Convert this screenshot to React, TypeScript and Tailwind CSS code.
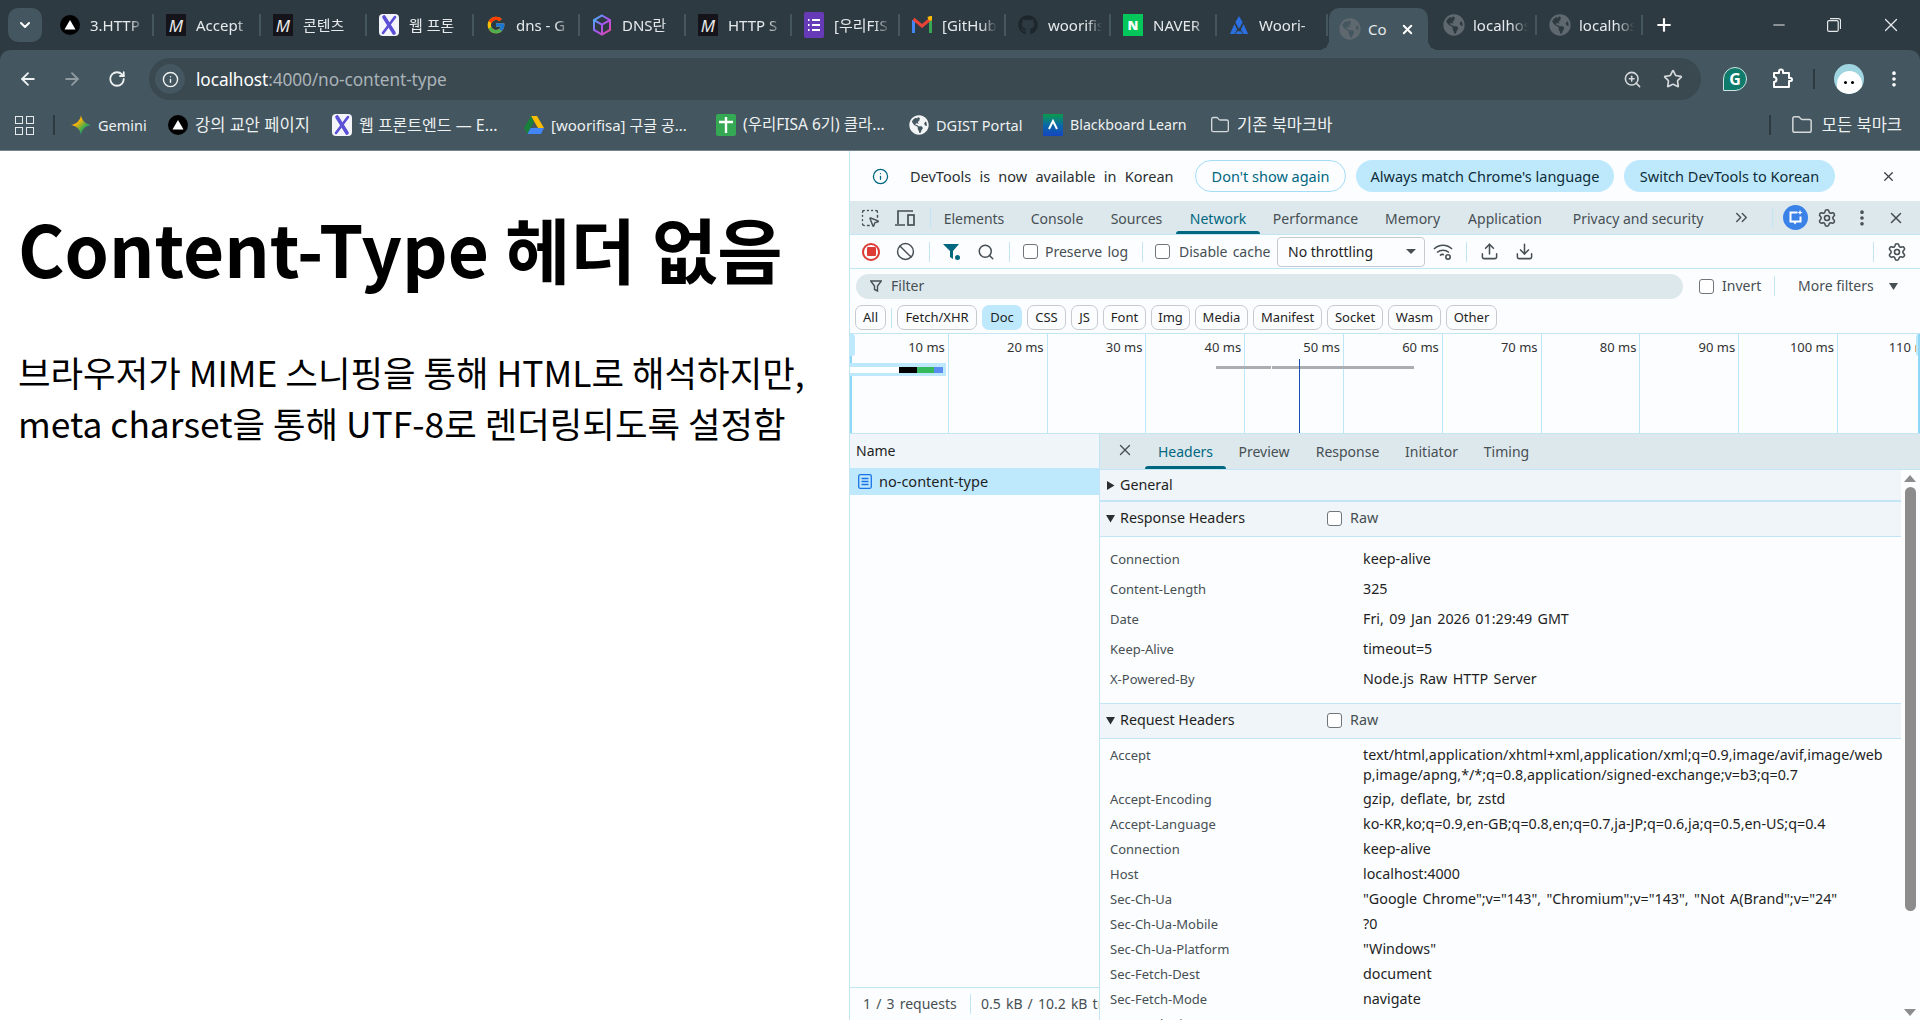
import React from "react";
import {
  ArrowLeft, ArrowRight, RotateCw, Info, ZoomIn, Star, MoreVertical, Minus, X, Plus, ChevronDown, Folder, Search, Ban,
  Upload, Download, Settings, ChevronsRight, SquareDashedMousePointer,
} from "lucide-react";
import { FaGithub, FaGlobeAmericas } from "react-icons/fa";
import { FcGoogle } from "react-icons/fc";

const Vercel = ({ s = 20 }: { s?: number }) => (
  <svg width={s} height={s} viewBox="0 0 20 20"><circle cx="10" cy="10" r="10" fill="#000" /><path d="M10 5l5.5 9.5h-11z" fill="#fff" /></svg>
);
const Mdn = () => (
  <div className="w-5 h-[22px] bg-[#15141a] flex items-center justify-center text-[#e8e8e8] italic text-[17px] leading-none">M</div>
);
const Tools = ({ s = 20 }: { s?: number }) => (
  <svg width={s} height={s + 2} viewBox="0 0 20 22"><rect width="20" height="22" rx="4" fill="#f4f4fb" /><path d="M5 3l10 16" stroke="#5a4fd6" strokeWidth="3.6" strokeLinecap="round" /><path d="M16 3L4 19" stroke="#5a4fd6" strokeWidth="2.600" strokeLinecap="round" /></svg>
);
const Cube = () => (
  <svg width="20" height="22" viewBox="0 0 20 22" fill="none"><defs><linearGradient id="cb" x1="0" y1="0" x2="1" y2="1"><stop stopColor="#38bdf8" /><stop offset=".5" stopColor="#a855f7" /><stop offset="1" stopColor="#ec4899" /></linearGradient></defs><path d="M10 1.5l8 4.6v9.8l-8 4.6-8-4.6V6.100zM2 6.100l8 4.600 8-4.600M10 10.700v9.800" stroke="url(#cb)" strokeWidth="2" /></svg>
);
const Forms = () => (
  <svg width="20" height="26" viewBox="0 0 20 26"><rect width="20" height="26" rx="2" fill="#673ab7" /><path d="M8 8h8M8 13h8M8 18h8M4 8h1.500M4 13h1.500M4 18h1.500" stroke="#fff" strokeWidth="2" /></svg>
);
const Gmail = () => (
  <svg width="20" height="18" viewBox="0 0 20 18" fill="none"><path d="M1.500 17V4" stroke="#4285f4" strokeWidth="3" /><path d="M18.500 17V4" stroke="#34a853" strokeWidth="3" /><path d="M1.500 3l8.500 7 8.500-7" stroke="#ea4335" strokeWidth="3" /><path d="M16 2.500l2.500-1v3" stroke="#fbbc04" strokeWidth="3" /></svg>
);
const Naver = () => (
  <div className="w-5 h-[22px] bg-[#03c75a] flex items-center justify-center text-white font-black text-[13px] leading-none">N</div>
);
const Woori = () => (
  <svg width="22" height="22" viewBox="0 0 22 22" fill="#2b6fe0"><path d="M11 1l4 7-4 7-4-7z" /><path d="M6 10l3 6-3 5H1z" /><path d="M16 10l5 11h-5l-3-5z" /><path d="M9 18h4l2 3H7z" /></svg>
);
const Globe = ({ c = "#5e686e", s = 22 }: { c?: string; s?: number }) => <FaGlobeAmericas size={s} color={c} />;
const Gemini = () => (
  <svg width="20" height="20" viewBox="0 0 20 20"><defs><linearGradient id="gm" x1="0" y1="0" x2="1" y2="1"><stop stopColor="#ef4444" /><stop offset=".35" stopColor="#f5b50a" /><stop offset=".65" stopColor="#34a853" /><stop offset="1" stopColor="#4285f4" /></linearGradient></defs><path d="M10 0c.8 5.500 4.500 9.200 10 10-5.500.8-9.200 4.500-10 10-.8-5.500-4.500-9.200-10-10 5.500-.8 9.200-4.500 10-10z" fill="url(#gm)" /></svg>
);
const Drive = () => (
  <svg width="20" height="18" viewBox="0 0 20 18"><path d="M7 0h6l7 12h-6z" fill="#fbbc04" /><path d="M7 0l3 6-6.500 12L0 12z" fill="#188038" /><path d="M6.500 12H20l-3 6H3.500z" fill="#4285f4" /></svg>
);
const Sheet = () => (
  <svg width="20" height="22" viewBox="0 0 20 22"><rect width="20" height="22" rx="2" fill="#34a853" /><path d="M3 8h14M10 3v16" stroke="#fff" strokeWidth="2.400" /></svg>
);
const Board = () => (
  <svg width="20" height="22" viewBox="0 0 20 22"><defs><linearGradient id="bb" x1="0" y1="0" x2="0" y2="1"><stop stopColor="#0a9c4a" /><stop offset=".5" stopColor="#0a6aa8" /><stop offset="1" stopColor="#1545c0" /></linearGradient></defs><rect width="20" height="22" fill="url(#bb)" /><path d="M6 15l4-8 4 8" stroke="#fff" strokeWidth="2" fill="none" /></svg>
);

const tabs = [
  { i: <Vercel />, t: "3.HTTP", w: "w-[106px]" },
  { i: <Mdn />, t: "Accept", w: "w-[107px]" },
  { i: <Mdn />, t: "콘텐츠", w: "w-[106px]" },
  { i: <Tools />, t: "웹 프론", w: "w-[107px]" },
  { i: <FcGoogle size={22} />, t: "dns - G", w: "w-[106px]" },
  { i: <Cube />, t: "DNS란", w: "w-[106px]" },
  { i: <Mdn />, t: "HTTP S", w: "w-[106px]" },
  { i: <Forms />, t: "[우리FIS", w: "w-[108px]" },
  { i: <Gmail />, t: "[GitHub", w: "w-[106px]" },
  { i: <FaGithub size={20} color="#1d262c" />, t: "woorifis", w: "w-[105px]" },
  { i: <Naver />, t: "NAVER", w: "w-[106px]" },
  { i: <Woori />, t: "Woori-", w: "w-[111px]" },
];

const bookmarks = [
  { i: <Gemini />, t: "Gemini", w: "w-[97px] text-[14.500px]" },
  { i: <Vercel />, t: "강의 교안 페이지", w: "w-[164px] text-[16.500px]" },
  { i: <Tools />, t: "웹 프론트엔드 — E...", w: "w-[192px] text-[16px]" },
  { i: <Drive />, t: "[woorifisa] 구글 공...", w: "w-[192px] text-[15px]" },
  { i: <Sheet />, t: "(우리FISA 6기) 클라...", w: "w-[193px] text-[15.500px]" },
  { i: <Globe c="#f2f4f5" s={20} />, t: "DGIST Portal", w: "w-[134px] text-[14.500px]" },
  { i: <Board />, t: "Blackboard Learn", w: "w-[167px] text-[14.200px]" },
  { i: <Folder size={22} color="#d5d9db" strokeWidth={1.6} />, t: "기존 북마크바", w: "w-[130px] text-[16.500px]" },
];

const Sep = ({ c = "h-[24px]" }: { c?: string }) => <div className={`w-px bg-[#c3e6f7] shrink-0 ${c}`} />;
const Check = () => <div className="w-[15px] h-[15px] rounded-[3px] border border-[#6f7579] bg-white shrink-0" />;

const dtTabs = [
  { t: "Elements", w: "w-[86px]" },
  { t: "Console", w: "w-[80px]" },
  { t: "Sources", w: "w-[79px]" },
  { t: "Network", w: "w-[84px]", a: true },
  { t: "Performance", w: "w-[111px]" },
  { t: "Memory", w: "w-[83px]" },
  { t: "Application", w: "w-[102px]" },
  { t: "Privacy and security", w: "w-[164px]" },
];

const chips = [
  { t: "Fetch/XHR", w: "w-[80px]" },
  { t: "Doc", w: "w-[40px]", a: true },
  { t: "CSS", w: "w-[39px]" },
  { t: "JS", w: "w-[27px]" },
  { t: "Font", w: "w-[43px]" },
  { t: "Img", w: "w-[39px]" },
  { t: "Media", w: "w-[53px]" },
  { t: "Manifest", w: "w-[69px]" },
  { t: "Socket", w: "w-[56px]" },
  { t: "Wasm", w: "w-[53px]" },
  { t: "Other", w: "w-[51px]" },
];

const resp = [
  ["Connection", "keep-alive"],
  ["Content-Length", "325"],
  ["Date", "Fri, 09 Jan 2026 01:29:49 GMT"],
  ["Keep-Alive", "timeout=5"],
  ["X-Powered-By", "Node.js Raw HTTP Server"],
];
const req = [
  ["Accept-Encoding", "gzip, deflate, br, zstd"],
  ["Accept-Language", "ko-KR,ko;q=0.9,en-GB;q=0.8,en;q=0.7,ja-JP;q=0.6,ja;q=0.5,en-US;q=0.4"],
  ["Connection", "keep-alive"],
  ["Host", "localhost:4000"],
  ["Sec-Ch-Ua", '"Google Chrome";v="143", "Chromium";v="143", "Not A(Brand";v="24"'],
  ["Sec-Ch-Ua-Mobile", "?0"],
  ["Sec-Ch-Ua-Platform", '"Windows"'],
  ["Sec-Fetch-Dest", "document"],
  ["Sec-Fetch-Mode", "navigate"],
  ["Sec-Fetch-Site", "none"],
];
const ticks = ["10 ms", "20 ms", "30 ms", "40 ms", "50 ms", "60 ms", "70 ms", "80 ms", "90 ms", "100 ms", "110 ms"];

const Tri = ({ open }: { open?: boolean }) => (
  <svg width="9" height="9" viewBox="0 0 9 9" className="shrink-0" fill="#2b2f31">{open ? <path d="M0 1h9L4.500 8.500z" /> : <path d="M1 0l7.500 4.500L1 9z" />}</svg>
);

export default function App() {
  return (
    <div className="w-[1920px] h-[1020px] overflow-hidden flex flex-col bg-[#2e3a41] font-['Noto_Sans','Noto_Sans_CJK_KR',sans-serif]">
      {/* tab strip */}
      <div className="h-[50px] shrink-0 flex items-center pl-[8px] text-[#e6eaec] text-[15px]">
        <div className="w-[34px] h-[34px] rounded-[10px] bg-[#44565f] flex items-center justify-center mr-[6px] shrink-0">
          <ChevronDown size={16} color="#fff" strokeWidth={3} />
        </div>
        {tabs.map((t) => (
          <div key={t.t} className={`${t.w} h-[34px] flex items-center pl-[12px] shrink-0`}>
            <div className="w-5 flex items-center justify-center shrink-0">{t.i}</div>
            <div className="ml-[10px] flex-1 overflow-hidden whitespace-nowrap [mask-image:linear-gradient(to_right,#000_65%,transparent_90%)]">{t.t}</div>
            <div className="w-[2px] h-[22px] bg-[#46565f] shrink-0 ml-[1px]" />
          </div>
        ))}
        <div className="w-[99px] h-[42px] mt-[8px] ml-[1px] bg-[#44565f] rounded-t-[10px] flex items-center pl-[10px] shrink-0 relative">
          <Globe />
          <span className="ml-[7px] flex-1 overflow-hidden">Co</span>
          <X size={15} color="#fff" strokeWidth={3} className="mr-[13px]" />
          <div className="absolute left-[-10px] bottom-0 w-[10px] h-[10px] bg-[radial-gradient(circle_at_0_0,#2e3a41_10px,#44565f_10px)]" />
          <div className="absolute right-[-10px] bottom-0 w-[10px] h-[10px] bg-[radial-gradient(circle_at_100%_0,#2e3a41_10px,#44565f_10px)]" />
        </div>
        {["a", "b"].map((k, n) => (
          <div key={k} className={`w-[106px] h-[34px] flex items-center shrink-0 pl-[12px] ${n === 0 ? "ml-[3px]" : ""}`}>
            <Globe />
            <div className="ml-[8px] flex-1 overflow-hidden whitespace-nowrap [mask-image:linear-gradient(to_right,#000_65%,transparent_95%)]">localhost</div>
            <div className="w-[2px] h-[20px] bg-[#46565f] shrink-0 ml-[4px]" />
          </div>
        ))}
        <Plus size={20} color="#fff" strokeWidth={2.6} className="ml-[11px] shrink-0" />
        <div className="flex-1" />
        <div className="flex items-center shrink-0 pr-[18px] gap-[39px]">
          <Minus size={18} color="#e6eaec" strokeWidth={1.4} />
          <svg width="14" height="14" viewBox="0 0 14 14" fill="none" stroke="#e6eaec" strokeWidth="1.200"><rect x=".6" y="2.600" width="10.600" height="10.800" rx="1.500" /><path d="M3 .6h8.500a2 2 0 012 2V11" /></svg>
          <X size={22} color="#e6eaec" strokeWidth={1.3} />
        </div>
      </div>

      {/* toolbar */}
      <div className="h-[50px] shrink-0 bg-[#44565f] rounded-t-[10px] flex items-center pl-[18px] pt-[8px]">
        <ArrowLeft size={20} color="#eef1f2" strokeWidth={2.2} />
        <ArrowRight size={20} color="#8f9ba1" strokeWidth={2.2} className="ml-[24px]" />
        <RotateCw size={18} color="#eef1f2" strokeWidth={2.4} className="ml-[26px]" />
        <div className="ml-[23px] w-[1552px] h-[42px] rounded-full bg-[#3a4850] flex items-center pl-[6px] pr-[18px]">
          <div className="w-[30px] h-[30px] rounded-full bg-[#44565f] flex items-center justify-center"><Info size={17} color="#eef1f2" strokeWidth={2} /></div>
          <div className="ml-[11px] pt-[2px] text-[17.300px] leading-none text-[#aab3b8] flex-1 tracking-[-0.1px]"><span className="text-white">localhost</span>:4000/no-content-type</div>
          <ZoomIn size={19} color="#d5d9db" strokeWidth={2} />
          <Star size={20} color="#d5d9db" strokeWidth={2} className="ml-[21px]" />
        </div>
        <div className="ml-[22px] w-[24px] h-[24px] rounded-full rounded-bl-none bg-[#0e7b6c] border border-[#cfe4e0] flex items-center justify-center text-white text-[16px] font-bold leading-none shrink-0">G</div>
        <svg width="22" height="22" viewBox="0 0 22 22" fill="none" stroke="#fff" strokeWidth="2" className="ml-[24px] shrink-0"><path d="M3 5h5V3.500a2 2 0 014 0V5h6v5h1.500a1.500 1.500 0 010 3H18v6H3v-5a2.500 2.500 0 000-5z" strokeLinejoin="round" /></svg>
        <div className="w-[2px] h-[20px] bg-[#2e3a41] ml-[20px] shrink-0" />
        <div className="ml-[19px] w-[30px] h-[30px] rounded-full bg-[#9fd5e0] flex items-end justify-center overflow-hidden shrink-0">
          <div className="w-[25px] h-[23px] rounded-t-full bg-white flex items-center justify-center gap-[4px]">
            <div className="w-[3px] h-[3px] bg-black rounded-full" />
            <div className="w-[3px] h-[3px] bg-black rounded-full" />
          </div>
        </div>
        <MoreVertical size={20} color="#fff" strokeWidth={2.4} className="ml-[20px] shrink-0" />
      </div>

      {/* bookmarks */}
      <div className="h-[51px] shrink-0 bg-[#44565f] flex items-center pl-[15px] border-b border-[#76858d] text-[#eef1f2] leading-none">
        <div className="grid grid-cols-2 gap-[3px] shrink-0">
          <div className="w-[8px] h-[8px] border-[1.500px] border-[#e6eaec]" />
          <div className="w-[8px] h-[8px] border-[1.500px] border-[#e6eaec]" />
          <div className="w-[8px] h-[8px] border-[1.500px] border-[#e6eaec]" />
          <div className="w-[8px] h-[8px] border-[1.500px] border-[#e6eaec]" />
        </div>
        <div className="w-[2px] h-[20px] bg-[#2e3a41] ml-[19px] mr-[16px] shrink-0" />
        {bookmarks.map((b) => (
          <div key={b.t} className={`${b.w} flex items-center gap-[7px] shrink-0 whitespace-nowrap`}>
            <div className="w-5 flex justify-center shrink-0">{b.i}</div>
            <span>{b.t}</span>
          </div>
        ))}
        <div className="flex-1" />
        <div className="w-[2px] h-[20px] bg-[#2e3a41] mr-[20px] shrink-0" />
        <Folder size={22} color="#d5d9db" strokeWidth={1.6} className="shrink-0" />
        <span className="ml-[9px] mr-[18px] whitespace-nowrap text-[16.500px]">모든 북마크</span>
      </div>

      {/* main */}
      <div className="flex-1 min-h-0 flex bg-white">
        {/* page */}
        <div className="w-[849px] shrink-0 pl-[18px] pr-[20px] font-['Noto_Sans_CJK_KR','Noto_Sans',sans-serif] text-black">
          <h1 className="text-[71px] font-bold leading-[96px] mt-[48px] whitespace-nowrap">Content-Type 헤더 없음</h1>
          <p className="text-[35.400px] leading-[51px] mt-[51px] whitespace-nowrap">브라우저가 MIME 스니핑을 통해 HTML로 해석하지만,<br />meta charset을 통해 UTF-8로 렌더링되도록 설정함</p>
        </div>

        {/* devtools */}
        <div className="flex-1 min-w-0 border-l border-[#c3e6f7] bg-[#fbfdff] flex flex-col text-[13px] text-[#1f1f1f] leading-none">
          {/* banner */}
          <div className="h-[50px] shrink-0 flex items-center pl-[22px] text-[14.500px]">
            <Info size={17} color="#00677f" strokeWidth={1.8} />
            <span className="ml-[21px] w-[285px] text-[#2b2f31] whitespace-nowrap [word-spacing:4.500px]">DevTools is now available in Korean</span>
            <div className="w-[151px] h-[32px] rounded-full border border-[#a5dcf7] flex items-center justify-center text-[#00677f]">Don't show again</div>
            <div className="ml-[10px] w-[258px] h-[32px] rounded-full bg-[#bee9fd] flex items-center justify-center text-[#0f2d38]">Always match Chrome's language</div>
            <div className="ml-[10px] w-[211px] h-[32px] rounded-full bg-[#bee9fd] flex items-center justify-center text-[#0f2d38]">Switch DevTools to Korean</div>
            <X size={15} color="#3c4043" strokeWidth={2} className="ml-[46px]" />
          </div>
          {/* tabs */}
          <div className="h-[34px] shrink-0 bg-[#dde8ed] border-b border-[#c3e6f7] flex items-stretch text-[14px] text-[#474f53]">
            <div className="flex items-center pl-[10px] w-[80px] shrink-0">
              <SquareDashedMousePointer size={20} color="#474f53" strokeWidth={1.7} />
              <svg width="22" height="20" viewBox="0 0 22 20" fill="none" stroke="#474f53" strokeWidth="1.700" className="ml-[14px]"><path d="M4 16V3h15M1 17h10" /><rect x="14" y="7" width="6" height="10" /></svg>
            </div>
            <Sep c="h-[20px] self-center" />
            {dtTabs.map((t) => (
              <div key={t.t} className={`${t.w} pt-[2px] flex items-center justify-center shrink-0 relative ${t.a ? "text-[#00677f]" : ""}`}>
                {t.t}
                {t.a ? <div className="absolute left-0 right-0 bottom-0 h-[3px] rounded-t-[3px] bg-[#00677f]" /> : null}
              </div>
            ))}
            <div className="flex items-center ml-[12px]"><ChevronsRight size={19} color="#474f53" strokeWidth={1.8} /></div>
            <div className="w-[21px] shrink-0" />
            <Sep c="h-[20px] self-center" />
            <div className="ml-[10px] self-center w-[25px] h-[25px] rounded-full bg-[#3b82e8] flex items-center justify-center shrink-0">
              <svg width="15" height="15" viewBox="0 0 15 15" fill="#fff"><path d="M1.500 1.500h8v2h-6v7h8v-4h2v6H8.500l-1.500 2-1.500-2h-4z" /><path d="M12 0l.8 1.700 1.700.8-1.700.8L12 5l-.8-1.700-1.700-.8 1.700-.8z" /></svg>
            </div>
            <div className="ml-[9px] self-center"><Settings size={20} color="#474f53" strokeWidth={1.9} /></div>
            <div className="ml-[15px] self-center"><MoreVertical size={20} color="#474f53" strokeWidth={2.4} /></div>
            <div className="ml-[15px] self-center"><X size={18} color="#474f53" strokeWidth={2} /></div>
          </div>
          {/* toolbar */}
          <div className="h-[34px] shrink-0 border-b border-[#c3e6f7] flex items-center pl-[12px] text-[#474f53] text-[14px]">
            <div className="w-[18px] h-[18px] rounded-full border-2 border-[#dc3b36] flex items-center justify-center shrink-0"><div className="w-[9px] h-[9px] bg-[#dc3b36] rounded-[1px]" /></div>
            <Ban size={19} color="#474f53" strokeWidth={1.8} className="ml-[16px] shrink-0" />
            <div className="w-[14px] shrink-0" />
            <Sep c="h-[20px]" />
            <svg width="18" height="18" viewBox="0 0 18 18" fill="#00677f" className="ml-[13px] shrink-0"><path d="M0 1h16l-6 7v8l-3-2V8z" /><circle cx="14.500" cy="14.500" r="2.500" /></svg>
            <Search size={18} color="#474f53" strokeWidth={2} className="ml-[16px] shrink-0" />
            <div className="w-[14px] shrink-0" />
            <Sep c="h-[20px]" />
            <div className="ml-[13px]"><Check /></div>
            <span className="ml-[7px] w-[97px] shrink-0 [word-spacing:1.500px]">Preserve log</span>
            <Sep c="h-[20px]" />
            <div className="ml-[12px]"><Check /></div>
            <span className="ml-[9px] w-[98px] shrink-0 whitespace-nowrap [word-spacing:1.500px]">Disable cache</span>
            <div className="w-[148px] h-[30px] border border-[#c7cbce] rounded-[4px] flex items-center pl-[10px] text-[14px] text-[#1f1f1f] shrink-0">
              <span className="flex-1">No throttling</span>
              <svg width="10" height="5" viewBox="0 0 10 5" fill="#474f53" className="mr-[8px]"><path d="M0 0h10L5 5z" /></svg>
            </div>
            <svg width="20" height="18" viewBox="0 0 20 18" fill="none" stroke="#474f53" strokeWidth="1.600" className="ml-[8px] shrink-0"><path d="M1 6c5-5 13-5 18 0M4 9.500c3.500-3 8.500-3 12 0M7 12.500c1-1 3-1.200 4-.8" /><circle cx="15" cy="14" r="2.200" /></svg>
            <div className="w-[13px] shrink-0" />
            <Sep c="h-[20px]" />
            <Upload size={19} color="#474f53" strokeWidth={1.9} className="ml-[13px] shrink-0" />
            <Download size={19} color="#474f53" strokeWidth={1.9} className="ml-[16px] shrink-0" />
            <div className="flex-1" />
            <Sep c="h-[20px]" />
            <Settings size={20} color="#474f53" strokeWidth={1.9} className="mx-[13px] shrink-0" />
          </div>
          {/* filter */}
          <div className="h-[36px] shrink-0 flex items-center pl-[6px] pb-[2px] text-[14px] text-[#474f53]">
            <div className="w-[827px] h-[25px] rounded-full bg-[#dde8ed] flex items-center pl-[14px] shrink-0">
              <svg width="12" height="12" viewBox="0 0 12 12" fill="none" stroke="#474f53" strokeWidth="1.400"><path d="M.6 1h10.800L7.500 6v5l-3-1.500V6z" /></svg>
              <span className="ml-[9px]">Filter</span>
            </div>
            <div className="ml-[16px]"><Check /></div>
            <span className="ml-[8px] w-[52px] shrink-0">Invert</span>
            <Sep c="h-[20px]" />
            <span className="ml-[23px] w-[91px] shrink-0">More filters</span>
            <svg width="9" height="7" viewBox="0 0 9 7" fill="#474f53"><path d="M0 0h9L4.500 7z" /></svg>
          </div>
          {/* chips */}
          <div className="h-[28px] shrink-0 flex items-start pl-[5px] gap-[5px] pb-[3px] text-[13px] text-[#1f1f1f]">
            <div className="w-[31px] h-[25px] rounded-[7px] border border-[#c7cbce] flex items-center justify-center shrink-0">All</div>
            <Sep c="h-[20px] self-center" />
            {chips.map((c) => (
              <div key={c.t} className={`${c.w} h-[25px] rounded-[7px] flex items-center justify-center shrink-0 ${c.a ? "bg-[#bee9fd]" : "border border-[#c7cbce]"}`}>{c.t}</div>
            ))}
          </div>
          {/* overview */}
          <div className="h-[101px] shrink-0 border-t border-b border-[#c3e6f7] flex relative overflow-hidden text-[13px] text-[#333]">
            {ticks.map((t) => (
              <div key={t} className="w-[98.800px] h-full shrink-0 border-r-[1.500px] border-[#bde6fa] flex justify-end pr-[3px] pt-[7px] whitespace-nowrap">{t}</div>
            ))}
            <div className="absolute left-0 top-0 bottom-0 w-[2px] bg-[#8fd6f7]" />
            <div className="absolute left-0 top-0 w-[5px] h-[22px] bg-[#bee9fd] rounded-r-[3px]" />
            <div className="absolute right-0 top-0 w-[4px] h-[22px] bg-[#bee9fd] rounded-l-[3px]" />
            <div className="absolute right-0 top-0 bottom-0 w-[2px] bg-[#8fd6f7]" />
            <div className="absolute left-0 top-[29px] w-[96px] h-[13px] bg-[#bee9fd] flex items-center">
              <div className="w-[49px] h-[6px] bg-white" />
              <div className="w-[18px] h-[6px] bg-black" />
              <div className="w-[17px] h-[6px] bg-[#36b85c]" />
              <div className="w-[9px] h-[6px] bg-[#5b8df0]" />
            </div>
            <div className="absolute left-[366px] top-[32px] w-[55px] h-[3px] bg-[#aaaeb0]" />
            <div className="absolute left-[422px] top-[32px] w-[142px] h-[3px] bg-[#aaaeb0]" />
            <div className="absolute left-[449px] top-[25px] bottom-0 w-px bg-[#1a4fb4]" />
          </div>
          {/* lower */}
          <div className="flex-1 min-h-0 flex overflow-hidden">
            <div className="w-[250px] shrink-0 border-r border-[#c3e6f7] flex flex-col">
              <div className="h-[34px] shrink-0 bg-[#eff5f8] flex items-center pl-[6px] text-[14px]">Name</div>
              <div className="h-[27px] shrink-0 bg-[#bee9fd] flex items-center pl-[8px] text-[14.500px] text-[#1f1f1f]">
                <svg width="14" height="15" viewBox="0 0 14 15" fill="none" stroke="#1a73e8" strokeWidth="1.300"><rect x=".7" y=".7" width="12.600" height="13.600" rx="1.500" /><path d="M3.500 4.500h7M3.500 7.500h7M3.500 10.500h7" /></svg>
                <span className="ml-[7px]">no-content-type</span>
              </div>
              <div className="flex-1" />
              <div className="h-[33px] shrink-0 border-t border-[#c3e6f7] flex items-center pl-[13px] text-[14px] text-[#474f53] whitespace-nowrap overflow-hidden [word-spacing:1.500px]">
                <span className="w-[107px] shrink-0">1 / 3 requests</span>
                <Sep c="h-[20px]" />
                <span className="ml-[10px]">0.5 kB / 10.2 kB transferred</span>
              </div>
            </div>
            <div className="flex-1 min-w-0 flex flex-col">
              <div className="h-[36px] shrink-0 bg-[#dde8ed] border-b border-[#c3e6f7] flex items-stretch text-[14px] text-[#474f53]">
                <div className="w-[45px] flex items-center justify-center shrink-0 pb-[3px] pl-[4px]"><X size={18} color="#474f53" strokeWidth={1.8} /></div>
                <div className="w-[81px] flex items-center justify-center relative text-[#00677f] shrink-0">Headers<div className="absolute left-0 right-0 bottom-0 h-[3px] rounded-t-[3px] bg-[#00677f]" /></div>
                <div className="w-[76px] flex items-center justify-center shrink-0">Preview</div>
                <div className="w-[91px] flex items-center justify-center shrink-0">Response</div>
                <div className="w-[77px] flex items-center justify-center shrink-0">Initiator</div>
                <div className="w-[73px] flex items-center justify-center shrink-0">Timing</div>
              </div>
              <div className="flex-1 min-h-0 flex overflow-hidden">
                <div className="w-[801px] shrink-0 text-[14.300px]">
                  <div className="h-[32px] bg-[#eff5f8] border-b-2 border-[#c3e6f7] flex items-center pl-[6px] gap-[5px]"><Tri />General</div>
                  <div className="h-[35px] bg-[#eff5f8] border-b border-[#c3e6f7] flex items-center pl-[6px] pb-[2px]">
                    <Tri open /><span className="ml-[5px] w-[207px] shrink-0">Response Headers</span><Check /><span className="ml-[8px] text-[#474f53]">Raw</span>
                  </div>
                  <div className="pt-[7px] pb-[9px] border-b border-[#c3e6f7]">
                    {resp.map(([k, v]) => (
                      <div key={k} className="h-[30px] flex items-center pl-[10px]"><span className="w-[253px] shrink-0 text-[13px] text-[#474f53]">{k}</span><span className="[word-spacing:1.700px]">{v}</span></div>
                    ))}
                  </div>
                  <div className="h-[35px] bg-[#eff5f8] border-b border-[#c3e6f7] flex items-center pl-[6px] pb-[2px]">
                    <Tri open /><span className="ml-[5px] w-[207px] shrink-0">Request Headers</span><Check /><span className="ml-[8px] text-[#474f53]">Raw</span>
                  </div>
                  <div className="pt-[5px]">
                    <div className="flex pl-[10px] h-[43px] pt-[1px]"><span className="w-[253px] shrink-0 text-[13px] text-[#474f53] leading-[20px]">Accept</span><span className="leading-[20px] whitespace-nowrap">text/html,application/xhtml+xml,application/xml;q=0.9,image/avif,image/web<br />p,image/apng,*/*;q=0.8,application/signed-exchange;v=b3;q=0.7</span></div>
                    {req.map(([k, v]) => (
                      <div key={k} className="h-[25px] flex items-center pl-[10px]"><span className="w-[253px] shrink-0 text-[13px] text-[#474f53]">{k}</span><span className="whitespace-nowrap [word-spacing:1.700px]">{v}</span></div>
                    ))}
                  </div>
                </div>
                <div className="flex-1 flex flex-col items-center pt-[5px] pr-[1px]">
                  <svg width="12" height="7" viewBox="0 0 12 7" fill="#8c8c8c"><path d="M6 0l6 7H0z" /></svg>
                  <div className="w-[11px] h-[424px] mt-[5px] rounded-full bg-[#8c8c8c]" />
                  <div className="flex-1" />
                  <svg width="12" height="7" viewBox="0 0 12 7" fill="#8c8c8c" className="mb-[4px]"><path d="M0 0h12L6 7z" /></svg>
                </div>
              </div>
            </div>
          </div>
        </div>
      </div>
    </div>
  );
}
